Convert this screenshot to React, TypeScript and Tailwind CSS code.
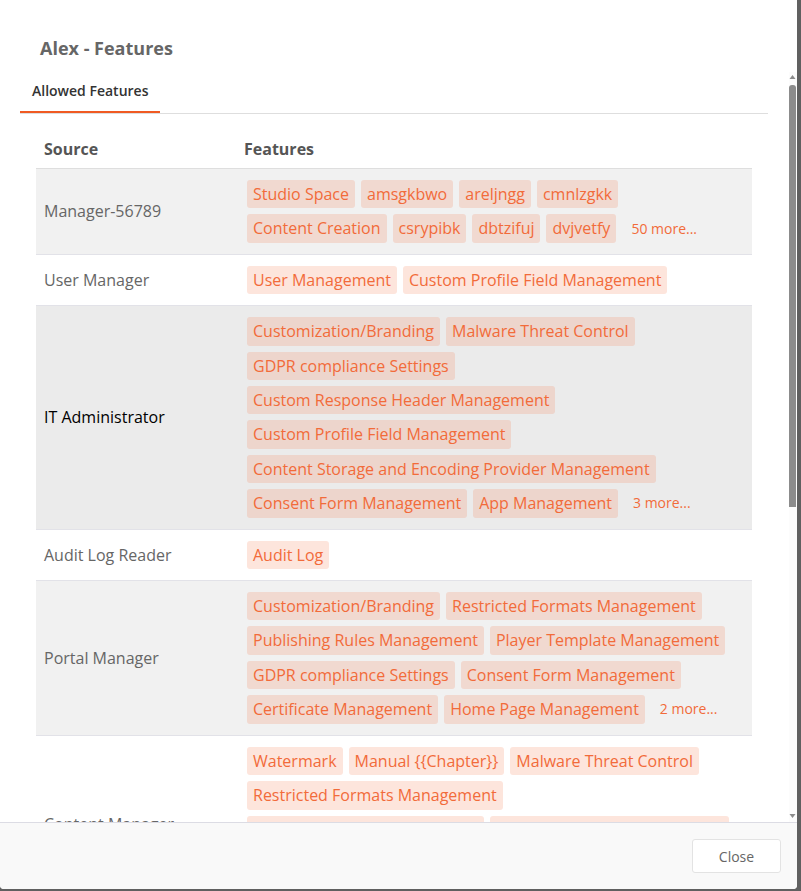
type Row = {
  source: string;
  features: string[];
  more?: number;
  hover?: boolean;
};

const rows: Row[] = [
  {
    source: "Manager-56789",
    features: [
      "Studio Space",
      "amsgkbwo",
      "areljngg",
      "cmnlzgkk",
      "Content Creation",
      "csrypibk",
      "dbtzifuj",
      "dvjvetfy",
    ],
    more: 50,
  },
  {
    source: "User Manager",
    features: ["User Management", "Custom Profile Field Management"],
  },
  {
    source: "IT Administrator",
    features: [
      "Customization/Branding",
      "Malware Threat Control",
      "GDPR compliance Settings",
      "Custom Response Header Management",
      "Custom Profile Field Management",
      "Content Storage and Encoding Provider Management",
      "Consent Form Management",
      "App Management",
    ],
    more: 3,
    hover: true,
  },
  { source: "Audit Log Reader", features: ["Audit Log"] },
  {
    source: "Portal Manager",
    features: [
      "Customization/Branding",
      "Restricted Formats Management",
      "Publishing Rules Management",
      "Player Template Management",
      "GDPR compliance Settings",
      "Consent Form Management",
      "Certificate Management",
      "Home Page Management",
    ],
    more: 2,
  },
  {
    source: "Content Manager",
    features: [
      "Watermark",
      "Manual {{Chapter}}",
      "Malware Threat Control",
      "Restricted Formats Management",
      "Publishing Rules Management",
      "Subtitle Provider Management",
      "Custom Profile Field Management",
      "Consent Form Management",
    ],
    more: 4,
  },
  {
    source: "Reporting Viewer",
    features: ["Analytics Dashboard", "Scheduled Reports"],
  },
];

function Tag({ label }: { label: string }) {
  return (
    <span className="m-[3px] rounded-[3px] bg-[#f77b4e]/20 px-[6px] py-[3px] text-[16px] leading-[22.4px] text-[#f26b3a] whitespace-nowrap">
      {label}
    </span>
  );
}

function FeatureRow({ row, index }: { row: Row; index: number }) {
  const bg = row.hover ? "bg-[#ebebeb]" : index % 2 === 0 ? "bg-[#f1f1f1]" : "bg-white";
  return (
    <tr className={`${bg} border-b border-[#e2e2e8]`}>
      <td
        className={`w-[200px] px-2 align-middle text-[16px] leading-[22px] ${
          row.hover ? "text-black" : "text-[#666]"
        }`}
      >
        {row.source}
      </td>
      <td className="p-2">
        <div className="flex flex-wrap items-center">
          {row.features.map((f, i) => (
            <Tag key={i} label={f} />
          ))}
          {row.more ? (
            <span className="ml-[12px] text-[14px] leading-[22px] text-[#f26b3a]">
              {row.more} more...
            </span>
          ) : null}
        </div>
      </td>
    </tr>
  );
}

function Scrollbar() {
  return (
    <div className="flex w-[8px] flex-col items-start bg-[#fcfcfc] pt-[2px] pb-[3px]">
      <svg width="7" height="6" viewBox="0 0 7 6">
        <path d="M3.5 1 L6.5 5 L0.5 5 Z" fill="#8c8c8c" />
      </svg>
      <div className="mt-[5px] h-[422px] w-[7px] rounded-t-[3px] bg-[#8c8c8c]" />
      <div className="flex-1" />
      <svg width="7" height="6" viewBox="0 0 7 6">
        <path d="M0.5 1 L6.5 1 L3.5 5 Z" fill="#8c8c8c" />
      </svg>
    </div>
  );
}

export default function App() {
  return (
    <div className="h-screen w-full bg-[#606060] pr-[4px] pb-[2px] font-['Open_Sans',sans-serif]">
      <div className="flex h-full flex-col overflow-hidden rounded-b-[4px] bg-white">
        {/* Title */}
        <div className="h-[72px] shrink-0 pl-10 pt-9">
          <h2 className="text-[18px] font-bold leading-[24px] text-[#666]">Alex - Features</h2>
        </div>

        {/* Scrolling body */}
        <div className="flex min-h-0 flex-1">
          <div className="min-w-0 flex-1 overflow-hidden pl-5 pr-[21px]">
            <div className="flex border-b border-[#dedede]">
              <button className="border-b-2 border-[#f05a22] px-3 pt-[10px] pb-[11px] text-[14px] font-semibold leading-[18px] text-[#333]">
                Allowed Features
              </button>
            </div>

            <div className="mx-4 mt-4">
              <table className="w-full border-collapse">
                <thead>
                  <tr className="border-b border-[#dedede]">
                    <th className="w-[200px] p-2 text-left text-[16px] font-bold leading-[22px] text-[#555]">
                      Source
                    </th>
                    <th className="p-2 text-left text-[16px] font-bold leading-[22px] text-[#555]">
                      Features
                    </th>
                  </tr>
                </thead>
                <tbody>
                  {rows.map((r, i) => (
                    <FeatureRow key={i} row={r} index={i} />
                  ))}
                </tbody>
              </table>
            </div>
          </div>
          <Scrollbar />
        </div>

        {/* Footer */}
        <div className="flex h-[67px] shrink-0 items-start justify-end border-t border-[#dcdce4] bg-[#f9f9f9] pt-4 pr-4">
          <button className="h-[34px] w-[89px] rounded-[3px] border border-[#e3e3e3] bg-white text-[14px] text-[#666]">
            Close
          </button>
        </div>
      </div>
    </div>
  );
}
